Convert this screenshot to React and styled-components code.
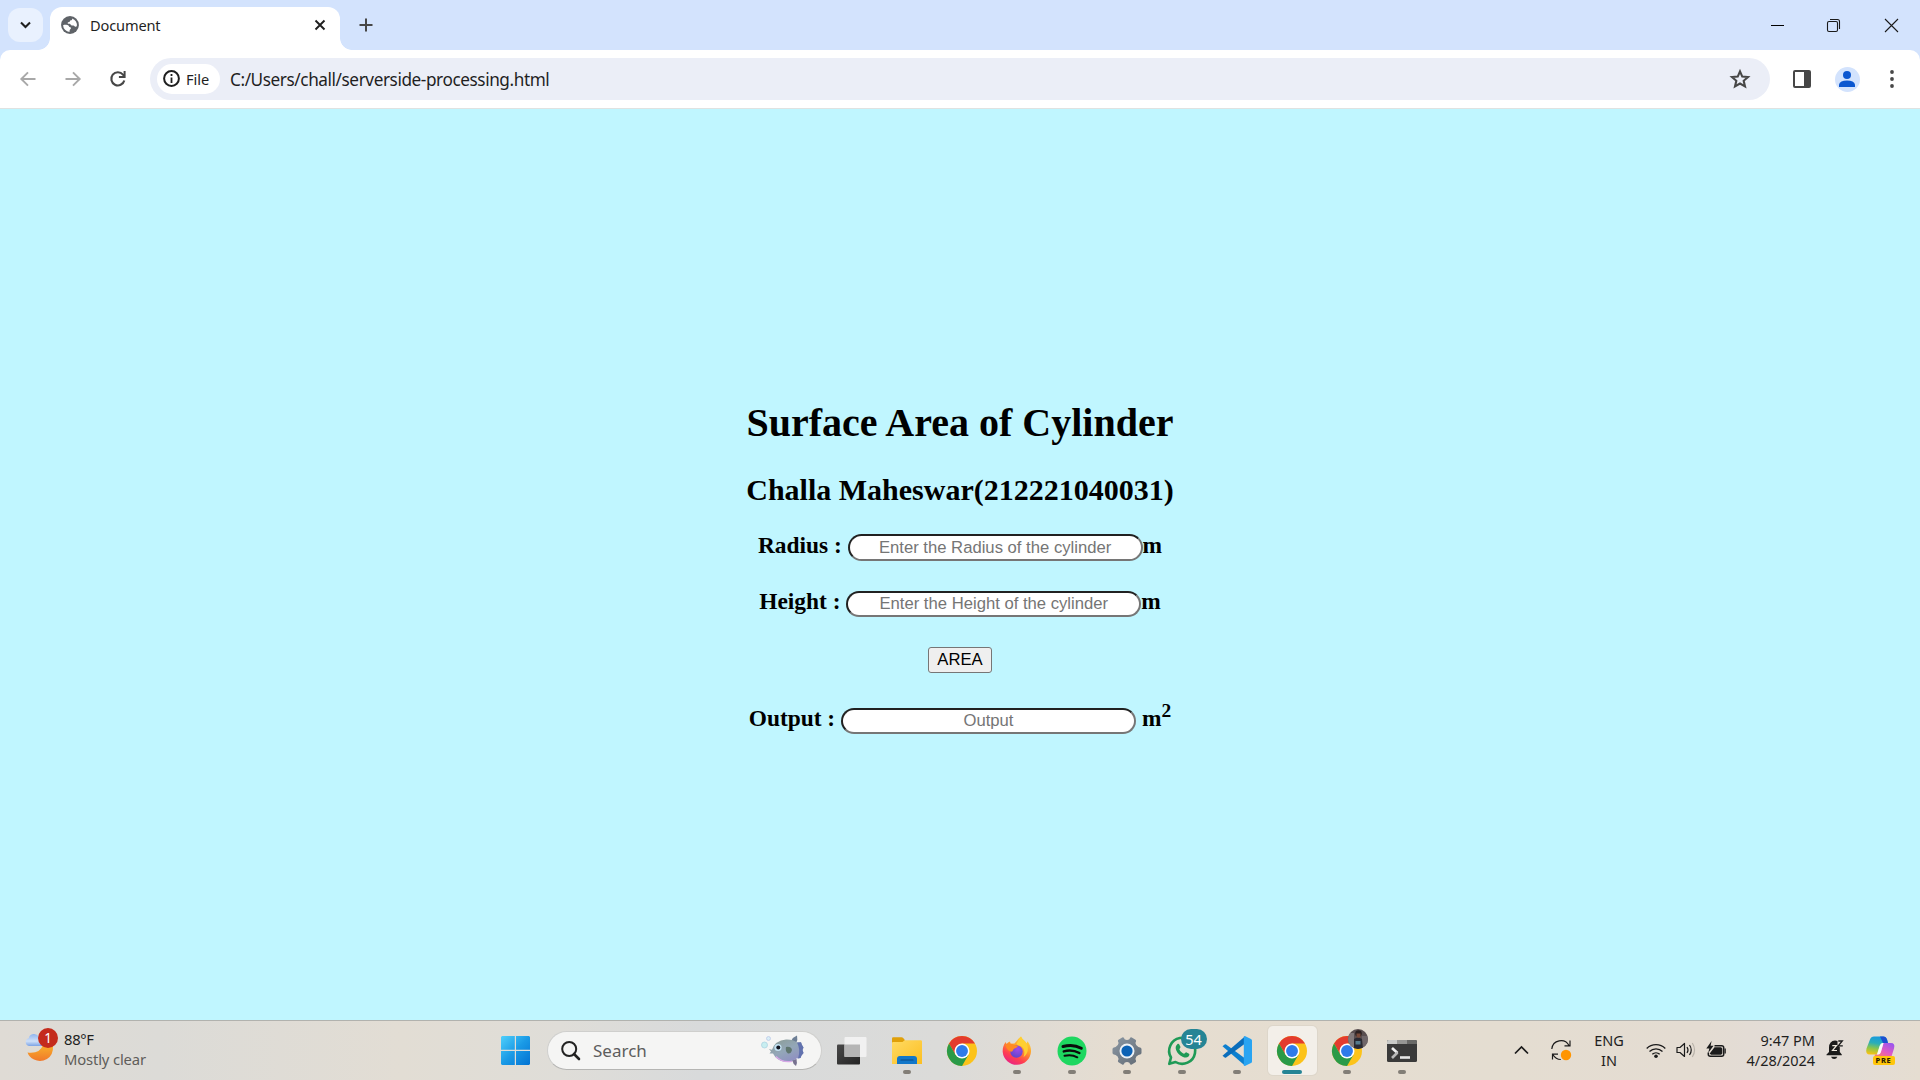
import React from "react";
import styled, { createGlobalStyle } from "styled-components";

const Global = createGlobalStyle`
  * { box-sizing: border-box; }
  body { margin: 0; overflow: hidden; }
`;

const UI = `"Noto Sans", "Open Sans", sans-serif`;

const Screen = styled.div`
  width: 1920px;
  height: 1080px;
  display: flex;
  flex-direction: column;
  overflow: hidden;
  font-family: ${UI};
`;

const Text = styled.span`
  display: block;
  white-space: nowrap;
  font-size: ${(p) => p.$size}px;
  line-height: ${(p) => p.$lh || 20}px;
  letter-spacing: ${(p) => p.$ls || 0}px;
  color: ${(p) => p.$color || "#1f1f1f"};
`;

/* ---------- Browser frame ---------- */
const TabStrip = styled.header`
  height: 50px;
  flex: none;
  display: flex;
  background: #d3e3fd;
  padding-left: 8px;
`;
const TabSearch = styled.button`
  width: 35px;
  height: 34px;
  margin: 8px 7px 0 0;
  padding: 0;
  border: 0;
  border-radius: 12px;
  background: #e9f1fe;
  display: grid;
  place-items: center;
`;
const Tab = styled.div`
  position: relative;
  width: 290px;
  height: 43px;
  margin-top: 7px;
  padding: 0 13px 7px 10px;
  border-radius: 12px 12px 0 0;
  background: #fff;
  display: flex;
  align-items: center;
  gap: 10px;
  &::before, &::after {
    content: "";
    position: absolute;
    bottom: 0;
    width: 12px;
    height: 12px;
  }
  &::before { left: -12px; background: radial-gradient(circle at 0 0, transparent 11.5px, #fff 12.2px); }
  &::after { right: -12px; background: radial-gradient(circle at 100% 0, transparent 11.5px, #fff 12.2px); }
`;
const Spacer = styled.div`flex: 1;`;
const NewTab = styled.div`
  display: grid;
  place-items: center;
  width: 51px;
  height: 50px;
`;
const WindowButtons = styled.div`
  display: flex;
  margin-left: auto;
  height: 50px;
`;
const WindowButton = styled.div`
  width: ${(p) => p.$w || 57}px;
  display: grid;
  place-items: center;
`;
const ToolbarBack = styled.div`
  flex: none;
  background: #d3e3fd;
`;
const Toolbar = styled.nav`
  height: 59px;
  display: flex;
  align-items: center;
  background: #fff;
  border-radius: 10px 10px 0 0;
  border-bottom: 1px solid #dfe2e1;
`;
const NavButtons = styled.div`
  display: flex;
  width: 150px;
  padding-left: 5px;
`;
const NavButton = styled.div`
  width: 45px;
  display: grid;
  place-items: center;
`;
const Omnibox = styled.div`
  width: 1620px;
  height: 42px;
  border-radius: 21px;
  background: #ebeef7;
  display: flex;
  align-items: center;
  padding: 0 20px 0 7px;
`;
const Chip = styled.div`
  width: 63px;
  height: 30px;
  border-radius: 15px;
  background: #fff;
  display: flex;
  align-items: center;
  gap: 6px;
  padding: 0 0 1px 6px;
  margin-right: 10px;
`;
const Address = styled(Text)`
  padding-top: 1px;
`;
const ToolbarActions = styled.div`
  display: flex;
  align-items: center;
  padding-left: 9.5px;
`;
const ActionSlot = styled.div`
  width: 45px;
  display: grid;
  place-items: center;
`;
const Avatar = styled.div`
  width: 25px;
  height: 25px;
  border-radius: 50%;
  background: #d3e3fd;
  display: grid;
  place-items: center;
`;

/* ---------- Document ---------- */
const Page = styled.main`
  flex: 1;
  background: #c0f6ff;
  color: #000;
  display: flex;
  flex-direction: column;
  align-items: center;
  font-family: "Liberation Serif", "Times New Roman", serif;
  font-weight: 700;
`;
const Title = styled.h1`
  margin: 291px 0 0;
  font-size: 40px;
  line-height: 46px;
`;
const Subtitle = styled.h2`
  margin: 27px 0 0;
  font-size: 30px;
  line-height: 34px;
`;
const Field = styled.div`
  display: flex;
  align-items: flex-start;
  height: 28px;
  margin-top: ${(p) => p.$top}px;
  font-size: 23.4px;
  line-height: 28px;
  white-space: pre;
`;
const Input = styled.input`
  width: 295px;
  height: ${(p) => p.$h || 26}px;
  margin: ${(p) => p.$drop || 4}px ${(p) => p.$gap || 0}px 0 0;
  padding: 1px 2px;
  border: 2px inset #767676;
  border-radius: 19px;
  background: #fff;
  text-align: center;
  font: 16.67px "Liberation Sans", Arial, sans-serif;
  &::placeholder { color: #757575; }
`;
const AreaButton = styled.button`
  width: 64px;
  height: 26px;
  margin: 32px 0 0;
  padding: 0;
  border: 1px solid #767676;
  border-radius: 3px;
  background: #efefef;
  color: #000;
  font: 16.67px/22px "Liberation Sans", Arial, sans-serif;
`;
const Sup = styled.sup`
  font-size: 19.5px;
  line-height: 20px;
  margin-top: -3px;
`;

/* ---------- Taskbar ---------- */
const Taskbar = styled.footer`
  flex: none;
  height: 60px;
  display: flex;
  border-top: 1px solid #b1b2ae;
  background: linear-gradient(90deg, #dfdbd5 0, #dcdbd7 160px, #e2ddd4 400px, #dfddd8 560px, #d8dadb 700px, #dbdbd9 940px, #e6ddd0 1130px, #e4ddd1 1500px, #e4dcd2 1700px, #e2dcd8 1800px, #e5ddd1 1920px);
`;
const Weather = styled.div`
  position: relative;
  width: 492px;
  display: flex;
  padding: 8px 0 0 24px;
`;
const WeatherText = styled.div`padding-left: 10px;`;
const Badge = styled.div`
  position: absolute;
  left: ${(p) => p.$x}px;
  top: ${(p) => p.$y}px;
  width: ${(p) => p.$w}px;
  height: 20px;
  border-radius: 10px;
  background: ${(p) => p.$bg};
  color: #fff;
  font-size: ${(p) => p.$size}px;
  line-height: 20px;
  text-align: center;
`;
const StartSlot = styled.div`
  width: 55px;
  padding: 6px 0 0 9px;
  display: flex;
  align-items: center;
  height: 52px;
`;
const SearchBox = styled.div`
  width: 275px;
  height: 39px;
  margin-top: 10px;
  border: 1px solid #cfcfcd;
  border-bottom-color: #b5b5b3;
  border-radius: 20px;
  background: #f5f5f4;
  display: flex;
  align-items: center;
  padding: 0 16px 0 13px;
  gap: 13px;
`;
const Apps = styled.div`
  display: flex;
  padding: 5px 0 0 5.5px;
`;
const AppSlot = styled.div`
  position: relative;
  width: 49px;
  height: 49px;
  margin-right: 6px;
  border-radius: 5px;
  display: grid;
  place-items: center;
  background: ${(p) => (p.$active ? "#f3efe9" : "transparent")};
  box-shadow: ${(p) => (p.$active ? "0 0 0 1px #ddd6ca" : "none")};
  &::after {
    content: "";
    display: ${(p) => (p.$mark ? "block" : "none")};
    position: absolute;
    bottom: 1px;
    left: ${(p) => (p.$active ? 14.5 : 20.5)}px;
    width: ${(p) => (p.$active ? 20 : 8)}px;
    height: 4px;
    border-radius: 2px;
    background: ${(p) => (p.$active ? "#258495" : "#827e77")};
  }
`;
const Photo = styled.div`
  position: absolute;
  left: 25px;
  top: 3px;
  width: 20px;
  height: 20px;
  border-radius: 50%;
  overflow: hidden;
`;
const Tray = styled.div`
  display: flex;
  align-items: center;
  margin-left: auto;
  padding-right: 15px;
`;
const TraySlot = styled.div`
  width: ${(p) => p.$w}px;
  height: 59px;
  padding-bottom: 1px;
  display: grid;
  place-items: center;
`;
const Stack = styled.div`
  width: ${(p) => p.$w}px;
  text-align: ${(p) => p.$align};
  padding-bottom: ${(p) => p.$lift || 1}px;
`;
const PreTag = styled.div`
  position: absolute;
  left: 7px;
  bottom: -1px;
  width: 22px;
  height: 9px;
  border-radius: 2px;
  background: #ffc60a;
  color: #2a1d00;
  font: 800 7.5px/9px ${UI};
  letter-spacing: 0.7px;
  text-align: center;
`;
const CopilotBox = styled.div`
  position: relative;
  width: 29px;
  height: 28px;
`;

const Svg = styled.svg.attrs((p) => ({
  width: p.$w,
  height: p.$h || p.$w,
  viewBox: p.$vb || `0 0 ${p.$w} ${p.$h || p.$w}`,
  fill: "none",
}))`
  display: block;
  flex: none;
  overflow: visible;
`;

function Chrome() {
  return (
    <Svg $w={30} $vb="0 0 48 48">
      <circle cx="24" cy="24" r="24" fill="#fcc31a" />
      <path d="M24 12h20.800A24 24 0 0 0 3.200 12L13.600 30z" fill="#e33b2e" />
      <path d="M3.200 12A24 24 0 0 0 24 48l10.400-18H24L13.600 30z" fill="#2a9a48" />
      <circle cx="24" cy="24" r="12" fill="#fff" />
      <circle cx="24" cy="24" r="9.500" fill="#2f7bea" />
    </Svg>
  );
}

function Folder() {
  return (
    <Svg $w={30} $h={27}>
      <defs>
        <linearGradient id="fold" x1="0" y1="0" x2="1" y2="1"><stop stopColor="#ffda62" /><stop offset="1" stopColor="#fcbf22" /></linearGradient>
      </defs>
      <path d="M0 1.500Q0 .3 1.200.3H9.500q1 0 1.700.7L13 3.300V7H0z" fill="#e0a00a" />
      <path d="M0 6q0-1 1-1h9.500L12.500 3.300h16.200q1.300 0 1.300 1.300V27H0z" fill="url(#fold)" />
      <path d="M5 27v-5q0-3 3-3h14q3 0 3 3v5z" fill="#1277c9" />
      <path d="M9 23h12" stroke="#0b4a85" strokeWidth="1.200" strokeLinecap="round" />
    </Svg>
  );
}

function Firefox() {
  return (
    <Svg $w={30}>
      <defs>
        <linearGradient id="ffBody" x1=".8" y1="0" x2=".25" y2="1"><stop stopColor="#ffe23c" /><stop offset=".4" stopColor="#ff9a2a" /><stop offset=".72" stopColor="#ff3f50" /><stop offset="1" stopColor="#e6208a" /></linearGradient>
        <radialGradient id="ffCore" cx=".6" cy=".3" r=".75"><stop stopColor="#a04be8" /><stop offset="1" stopColor="#5d45c8" /></radialGradient>
      </defs>
      <path d="M19 .5c1 3 4 4 5.500 7l1-2.300c3 4 3.700 7 3.500 10.500A14.200 14.200 0 0 1 .7 16C.5 12 1.500 9 3.700 6l.8 2c1-1.300 2-2 3.500-2.500l.5 2.200 4-.2c2-2 3.500-5 6.500-7z" fill="url(#ffBody)" />
      <circle cx="14.500" cy="15.500" r="6.200" fill="url(#ffCore)" />
      <path d="M3.500 9c3-2 6-2 8.500 0 1.500.5 3 .2 4 1-1 2-3.500 2-4.500 3.200-1 1.300-.5 2.200-2.500 2.500C6 15 4 12 3.500 9z" fill="#ff8a22" />
      <path d="M19 .5c1 3 4 4 5.500 7 3 5 1 11-3 13.500 1.500-4 1-8-1.500-10-2-2-4.500-1-5.500-3.200C16 6 17 3 19 .5z" fill="#ffcf32" />
    </Svg>
  );
}

function Spotify() {
  return (
    <Svg $w={30}>
      <circle cx="15" cy="15" r="14.500" fill="#1ed760" />
      <g stroke="#0b0b0b" strokeLinecap="round">
        <path d="M6 10.500c6.500-1.800 13-1.200 18.300 1.700" strokeWidth="3" />
        <path d="M6.800 15.400c5.500-1.500 10.800-.9 15.600 1.600" strokeWidth="2.500" />
        <path d="M7.500 19.800c4.700-1.200 9-.7 12.800 1.500" strokeWidth="2" />
      </g>
    </Svg>
  );
}

function Gear() {
  return (
    <Svg $w={30}>
      <defs><linearGradient id="gear" x1="0" y1="0" x2="1" y2="1"><stop stopColor="#8b97a3" /><stop offset="1" stopColor="#626b75" /></linearGradient></defs>
      <path
        d="M10.200 1.500q1.200-.6 1.800.5l.6 1.300q2.400 1.600 4.800 0L18 2q.6-1.100 1.800-.5l3.700 2.200q.9.700.5 1.800l-.6 1.600q.4 2.800 3 4l1.700.3q1.200.2 1.400 1.500v4.200q-.2 1.300-1.400 1.500l-1.700.3q-2.600 1.200-3 4l.6 1.600q.4 1.100-.5 1.800l-3.700 2.200q-1.200.6-1.800-.5l-.6-1.300q-2.400-1.600-4.800 0L12 28q-.6 1.100-1.800.5l-3.700-2.200q-.9-.7-.5-1.800l.6-1.600q-.4-2.800-3-4l-1.700-.3Q.7 18.400.5 17.100v-4.200q.2-1.300 1.400-1.500l1.700-.3q2.600-1.200 3-4L6 5.500q-.4-1.100.5-1.800z"
        fill="url(#gear)"
      />
      <circle cx="15" cy="15" r="7.500" fill="#eef2f6" />
      <circle cx="15" cy="15" r="5.600" fill="#0c62b5" />
    </Svg>
  );
}

function WhatsApp() {
  return (
    <Svg $w={30}>
      <path d="M2.300 27.800 4 21.500A13 13 0 1 1 8.500 26z" stroke="#1f9a56" strokeWidth="2.600" strokeLinejoin="round" />
      <path d="M10.300 8.200c.8-.7 1.600-.5 2 .3l1.200 2.600c.2.700-1.300 2-1.100 2.500 1 2 2.600 3.400 4.500 4.200.7.200 1.700-1.700 2.300-1.500l2.800 1.400c.8.500.3 2-.5 2.800-1.500 1.500-3.500 1.300-6 .2-3-1.400-5.200-3.800-6.400-6.800-.8-2.200-.5-4.300 1.200-5.700z" fill="#1f9a56" />
    </Svg>
  );
}

function Code() {
  return (
    <Svg $w={30}>
      <path d="M.5 10.300 2.700 8.500q.7-.5 1.400 0L22.500 22v7.300z" fill="#0d7fcf" />
      <path d="M.5 19.700 2.700 21.500q.7.500 1.400 0L22.500 8V.7z" fill="#0a6dbb" />
      <path d="M21.800.4q.8-.5 1.600-.1l5.600 2.600q1 .5 1 1.600v21q0 1.100-1 1.600l-5.600 2.600q-.8.400-1.600-.1z" fill="#29a4f2" />
    </Svg>
  );
}

function Terminal() {
  return (
    <Svg $w={30} $h={22}>
      <rect width="30" height="22" rx="1.500" fill="#3a3a3a" />
      <path d="M1.500 0H10v4H0V1.500Q0 0 1.500 0z" fill="#c9cac8" />
      <path d="M10 0h10v4H10z" fill="#969694" />
      <path d="M20 0h8.500Q30 0 30 1.500V4H20z" fill="#696967" />
      <path d="m5 8 5.500 5" stroke="#f1f1f1" strokeWidth="2.600" />
      <path d="M10.500 12.500 5 18" stroke="#b9b9b9" strokeWidth="2.600" />
      <path d="M13 17.500h10" stroke="#e6e6e6" strokeWidth="2.600" />
    </Svg>
  );
}

function TaskView() {
  return (
    <Svg $w={30} $h={28}>
      <defs>
        <linearGradient id="tvA" x1="0" y1="0" x2="1" y2="1"><stop stopColor="#484848" /><stop offset="1" stopColor="#242424" /></linearGradient>
      </defs>
      <rect x="0" y="7.500" width="23" height="20" rx="1" fill="url(#tvA)" />
      <rect x="7.500" y="0" width="22" height="20" rx="1" fill="#f1f1f1" />
      <rect x="7.500" y="7.500" width="15.500" height="12.500" fill="#b5b5b5" />
    </Svg>
  );
}

function Fish() {
  return (
    <Svg $w={44} $h={32}>
      <defs>
        <linearGradient id="fish" x1=".1" y1="0" x2=".8" y2="1"><stop stopColor="#8b9c94" /><stop offset=".5" stopColor="#93a7b8" /><stop offset="1" stopColor="#8f8cc4" /></linearGradient>
      </defs>
      <path d="M30 6q2-4 6-5.500 1 4-1 8z" fill="#6e7f95" />
      <path d="M31 25q1 4 4 6 1.500-3.500.5-7z" fill="#77718f" />
      <path d="M8 14l3 .8Q14 5.500 25 4.500q7-.3 11 3l4-.3 1 2.800 1.500 2.500-1 2.500 1 3-2 2.500-1 2.500-4 .5q-5 3.500-12 3.200-8-1.200-11.500-8.200L8.500 18.500l1.500-2z" fill="url(#fish)" />
      <path d="M15 21.500q6 6.500 16 4.800" stroke="#d7a7e6" strokeWidth="1.300" />
      <path d="M36 7.500q4 7.500 1 16l2.500-.5 1-2.500 2-2.500-1-3 1-2.500L41 10l-1-2.800z" fill="#6272ae" />
      <path d="M25 12q5-1 6 3-1 4-4 3.500-3-2-2-6.500z" fill="#5f766e" />
      <circle cx="17" cy="12.500" r="3.600" fill="#c3e2f2" />
      <circle cx="17.300" cy="12.500" r="2" fill="#12151f" />
      <circle cx="3.500" cy="10" r="3" fill="#c8eef0" stroke="#a9d0e0" strokeWidth=".7" />
      <circle cx="7.500" cy="3.500" r="2" fill="#d8eef6" stroke="#b9c5e6" strokeWidth=".7" />
    </Svg>
  );
}

function Copilot() {
  return (
    <CopilotBox>
      <Svg $w={29} $h={28}>
        <defs>
          <linearGradient id="cpA" x1=".4" y1="0" x2=".2" y2="1"><stop stopColor="#199bdc" /><stop offset=".35" stopColor="#2aaeb8" /><stop offset=".65" stopColor="#8cc64a" /><stop offset="1" stopColor="#ffc20e" /></linearGradient>
          <linearGradient id="cpB" x1=".8" y1="0" x2=".2" y2="1"><stop stopColor="#9a55ee" /><stop offset=".5" stopColor="#e45ac0" /><stop offset="1" stopColor="#ff8a4a" /></linearGradient>
        </defs>
        <path d="M8 .5h9q3 0 4 3l1 3.500h-5q-2 0-3 3l-3 8.500H4q-5 0-3.500-6L4 3.500Q5 .5 8 .5z" fill="url(#cpA)" />
        <path d="M14 .5h3.500q2.500 0 3.500 3l1 3.500h-5z" fill="#1c4fd0" />
        <path d="M17.500 7H25q4.500 0 3 5.500l-2.500 8Q24.500 24 21 24H10q-2.500 0-2-2l1-3.500h3q2 0 2.700-2.500z" fill="url(#cpB)" />
        <path d="M17.500 7h-1q-2 0-3 3L11 18.500h1.200q2 0 2.800-2.500z" fill="#fff" opacity=".85" />
      </Svg>
      <PreTag>PRE</PreTag>
    </CopilotBox>
  );
}

function Bell() {
  return (
    <Svg $w={18} $h={20}>
      <path d="M3 12V7.500Q3.300 1 9 .6q1.500 0 2.500.5v4.400L13.800 7v5l2 2.600v.6H.5v-.6z" fill="#1b1b1b" />
      <path d="M5 16.800h6.400Q10.500 19 8.200 19T5 16.800z" fill="#1b1b1b" />
      <path d="M6.300 5.700h4.200L6.500 10.500H11" stroke="#eee8dd" strokeWidth="1.200" />
      <path d="M12.300 1h4l-4 4.800h4.500" stroke="#1b1b1b" strokeWidth="1.300" />
    </Svg>
  );
}

function BrowserTop() {
  return (
    <>
      <TabStrip>
        <TabSearch>
          <Svg $w={11} $h={8}><path d="m1 1.500 4.500 4.500L10 1.500" stroke="#1f1f1f" strokeWidth="2.100" /></Svg>
        </TabSearch>
        <Tab>
          <Svg $w={20} $vb="0 0 24 24">
            <circle cx="12" cy="12" r="10.700" fill="#5f6368" />
            <path fill="#fff" d="M3.700 12.300c1.500-.5 3-.6 5-.3 1.600.3 2 1.300 2.300 2 .4.700 2.200.3 2.200 1.700 0 1.100-1 1.500-1.500 2.300-.4.700-.3 1.500-.2 2.300A8.300 8.300 0 0 1 3.700 12.300zM14.500 4.100c.4 1.400-.2 2-1.400 2.300-1.400.4-.9 1.500-1.900 2-.8.300-1.700.1-2 .9-.3 1 .7 1.300 1.700 1.200 1.300-.1 1.500.3 1.900 1.300.4.900 1.300.9 2.300.8 1.500-.1 1.900.6 2.600 1.100.7.500 1.700.3 2.500-.2a8.300 8.300 0 0 0-5.700-9.400z" />
          </Svg>
          <Text $size={14.6} $ls={-0.15}>Document</Text>
          <Spacer />
          <Svg $w={14}><path d="m2.500 2.500 9 9m0-9-9 9" stroke="#1f1f1f" strokeWidth="1.900" /></Svg>
        </Tab>
        <NewTab><Svg $w={14}><path d="M7 .5v13M.5 7h13" stroke="#474747" strokeWidth="2" /></Svg></NewTab>
        <WindowButtons>
          <WindowButton $w={56}><Svg $w={13}><path d="M0 6.500h13" stroke="#000" /></Svg></WindowButton>
          <WindowButton $w={57}>
            <Svg $w={13}><rect x=".5" y="2.500" width="10" height="10" rx="1.500" stroke="#1a1a1a" strokeWidth="1.100" /><path d="M3 .5h7.500q2 0 2 2V10" stroke="#1a1a1a" strokeWidth="1.100" /></Svg>
          </WindowButton>
          <WindowButton $w={58}><Svg $w={13}><path d="m0 0 13 13m0-13L0 13" stroke="#1a1a1a" strokeWidth="1.100" /></Svg></WindowButton>
        </WindowButtons>
      </TabStrip>
      <ToolbarBack>
        <Toolbar>
          <NavButtons>
            <NavButton><Svg $w={16}><path d="M15.500 8H1.500M8 1.300 1.300 8 8 14.700" stroke="#a8a8a8" strokeWidth="1.900" /></Svg></NavButton>
            <NavButton><Svg $w={16}><path d="M.5 8h14M8 1.300 14.700 8 8 14.700" stroke="#a8a8a8" strokeWidth="1.900" /></Svg></NavButton>
            <NavButton><Svg $w={16}><path d="M14.300 9.500A6.600 6.600 0 1 1 13 3.600L14 5" stroke="#474747" strokeWidth="2.100" /><path d="M15.600 0v6.900H8.900V4.900h4.700V0z" fill="#474747" /></Svg></NavButton>
          </NavButtons>
          <Omnibox>
            <Chip>
              <Svg $w={17}><circle cx="8.500" cy="8.500" r="7.400" stroke="#1f1f1f" strokeWidth="2" /><path d="M8.500 7.600V13M8.500 4v2" stroke="#1f1f1f" strokeWidth="1.800" /></Svg>
              <Text $size={14.6}>File</Text>
            </Chip>
            <Address $size={17.2} $lh={24} $ls={-0.42}>C:/Users/chall/serverside-processing.html</Address>
            <Spacer />
            <Svg $w={20} $vb="0 0 24 24"><path d="m12 2.800 2.700 6.300 6.900.6-5.200 4.500 1.600 6.700L12 17.400l-6 3.500 1.600-6.700-5.200-4.500 6.900-.6z" stroke="#474747" strokeWidth="2.500" /></Svg>
          </Omnibox>
          <ToolbarActions>
            <ActionSlot><Svg $w={18}><rect x="1" y="1" width="16" height="16" rx="1" stroke="#474747" strokeWidth="2" /><path d="M11 1h6v16h-6z" fill="#474747" /></Svg></ActionSlot>
            <ActionSlot>
              <Avatar><Svg $w={16}><circle cx="8" cy="4" r="4" fill="#0b57d0" /><path d="M0 16v-2.500Q1 9.500 8 9.500t8 4V16z" fill="#0b57d0" /></Svg></Avatar>
            </ActionSlot>
            <ActionSlot><Svg $w={4} $h={18}><circle cx="2" cy="2" r="1.900" fill="#474747" /><circle cx="2" cy="9" r="1.900" fill="#474747" /><circle cx="2" cy="16" r="1.900" fill="#474747" /></Svg></ActionSlot>
          </ToolbarActions>
        </Toolbar>
      </ToolbarBack>
    </>
  );
}

function WindowsTaskbar() {
  return (
    <Taskbar>
      <Weather>
        <Svg $w={30} $h={36}>
          <defs>
            <linearGradient id="moon" x1="0" y1="0" x2="0" y2="1"><stop stopColor="#f9b02a" /><stop offset="1" stopColor="#f0792b" /></linearGradient>
            <linearGradient id="cloud" x1="0" y1="0" x2="0" y2="1"><stop stopColor="#8fb4ee" /><stop offset=".6" stopColor="#cfe0f8" /><stop offset="1" stopColor="#7ba3e6" /></linearGradient>
          </defs>
          <path d="M3.500 23.500Q16 25 19 16l10 1q.5 9-6 13-6.500 3.500-13 .5-5-2.500-6.500-7z" fill="url(#moon)" />
          <path d="M4 18.500a4 4 0 0 1-.3-7.800 5.500 5.500 0 0 1 10-1.700L18 18.500z" fill="url(#cloud)" transform="translate(1 -1.500)" />
        </Svg>
        <Badge $x={38} $y={7} $w={20} $bg="#c42b1c" $size={13.5}>1</Badge>
        <WeatherText>
          <Text $size={14.8} $ls={-0.3}>88°F</Text>
          <Text $size={14.8} $ls={-0.15} $color="#5f5d5a">Mostly clear</Text>
        </WeatherText>
      </Weather>
      <StartSlot>
        <Svg $w={29}>
          <defs><linearGradient id="win" x1="0" y1="0" x2="29" y2="29" gradientUnits="userSpaceOnUse"><stop stopColor="#4fd0fb" /><stop offset=".5" stopColor="#1a9ae6" /><stop offset="1" stopColor="#0272d2" /></linearGradient></defs>
          <path d="M1 0h12.800v13.800H0V1zM15 0h13l1 1v12.800H15zM0 15h13.800v14H1l-1-1zM15 15h14v13l-1 1H15z" fill="url(#win)" />
        </Svg>
      </StartSlot>
      <SearchBox>
        <Svg $w={19}><circle cx="8.200" cy="8" r="7" stroke="#222" strokeWidth="2" /><path d="m13 13 5 5" stroke="#222" strokeWidth="2.600" strokeLinecap="round" /></Svg>
        <Text $size={17} $lh={24} $color="#5d5d5d">Search</Text>
        <Spacer />
        <Fish />
      </SearchBox>
      <Apps>
        <AppSlot><TaskView /></AppSlot>
        <AppSlot $mark><Folder /></AppSlot>
        <AppSlot><Chrome /></AppSlot>
        <AppSlot $mark><Firefox /></AppSlot>
        <AppSlot $mark><Spotify /></AppSlot>
        <AppSlot $mark><Gear /></AppSlot>
        <AppSlot $mark><WhatsApp /><Badge $x={23} $y={3} $w={26} $bg="#258495" $size={14.5}>54</Badge></AppSlot>
        <AppSlot $mark><Code /></AppSlot>
        <AppSlot $mark $active><Chrome /></AppSlot>
        <AppSlot $mark>
          <Chrome />
          <Photo>
            <Svg $w={20}>
              <rect width="20" height="20" fill="#5a4f50" />
              <path d="M0 4h6v16H0z" fill="#81797a" /><path d="M14 7h6v13h-6z" fill="#6f6669" />
              <path d="M6 10q4-3 8 0l1 10H6z" fill="#2a2a33" /><circle cx="10.500" cy="4.500" r="3.300" fill="#2b2020" />
              <path d="M8.500 4.500h4v3.500q-2 1.500-4 0z" fill="#7a4a39" /><path d="M7.500 12h5v3.500h-5z" fill="#557b8d" />
            </Svg>
          </Photo>
        </AppSlot>
        <AppSlot $mark><Terminal /></AppSlot>
      </Apps>
      <Tray>
        <TraySlot $w={42}><Svg $w={13} $h={8}><path d="m0 7.500 6.500-6.500L13 7.500" stroke="#1b1b1b" strokeWidth="1.700" /></Svg></TraySlot>
        <TraySlot $w={38}>
          <Svg $w={20}>
            <path d="M.8 9A9.200 9.200 0 0 1 18 5.500M19 .5v5.300h-5.500M1.500 19.500v-5.300H7M1.800 14.500q3 5 8 5" stroke="#1b1b1b" strokeWidth="1.200" />
            <circle cx="15" cy="15" r="5.200" fill="#ff9500" />
          </Svg>
        </TraySlot>
        <Stack $w={58} $align="center">
          <Text $size={14.5}>ENG</Text>
          <Text $size={14.5}>IN</Text>
        </Stack>
        <TraySlot $w={36}>
          <Svg $w={20} $h={16}>
            <path d="M.7 6.500a13 13 0 0 1 18.600 0M3.500 9.500a9.200 9.200 0 0 1 13 0M6.300 12.300a5.400 5.400 0 0 1 7.400 0" stroke="#1b1b1b" strokeWidth="1.300" />
            <circle cx="10" cy="14.300" r="1.800" fill="#1b1b1b" />
          </Svg>
        </TraySlot>
        <TraySlot $w={24}>
          <Svg $w={20} $h={16}>
            <path d="M1 5.500h3L8.500 1.500v13L4 10.500H1z" stroke="#1b1b1b" strokeWidth="1.200" strokeLinejoin="round" />
            <path d="M11 5q2 3 0 6M13.500 3q3.500 5 0 10" stroke="#1b1b1b" strokeWidth="1.200" /><path d="M16.300 1q4.500 7 0 14" stroke="#b9b3aa" strokeWidth="1.200" />
          </Svg>
        </TraySlot>
        <TraySlot $w={36}>
          <Svg $w={21} $h={18}>
            <path d="M8.500 4.700h7.200q2 0 2 2v6.600q0 2-2 2H4.300q-2 0-2-2V11.500" stroke="#1b1b1b" strokeWidth="1.500" />
            <path d="M8.500 6.200h6.600l1.200 1.200v5.200l-1.200 1.200H5l-1.300-1.300zM18.500 7.500h1.300v5h-1.300zM5.600 0 .3 7.500h3L2.200 12 7.500 4.800H4.600z" fill="#1b1b1b" />
          </Svg>
        </TraySlot>
        <Stack $w={81} $align="right" $lift={2}>
          <Text $size={14.5}>9:47 PM</Text>
          <Text $size={14.5} $ls={-0.05}>4/28/2024</Text>
        </Stack>
        <TraySlot $w={40}><Bell /></TraySlot>
        <TraySlot $w={50}><Copilot /></TraySlot>
      </Tray>
    </Taskbar>
  );
}

export default function App() {
  return (
    <Screen>
      <Global />
      <BrowserTop />
      <Page>
        <Title>Surface Area of Cylinder</Title>
        <Subtitle>Challa Maheswar(212221040031)</Subtitle>
        <Field $top={24}>{"Radius : "}<Input $h={27} $drop={3} placeholder="Enter the Radius of the cylinder" />m</Field>
        <Field $top={28}>{"Height : "}<Input placeholder="Enter the Height of the cylinder" />m</Field>
        <AreaButton>AREA</AreaButton>
        <Field $top={31}>{"Output : "}<Input placeholder="Output" $gap={6} />m<Sup>2</Sup></Field>
      </Page>
      <WindowsTaskbar />
    </Screen>
  );
}
